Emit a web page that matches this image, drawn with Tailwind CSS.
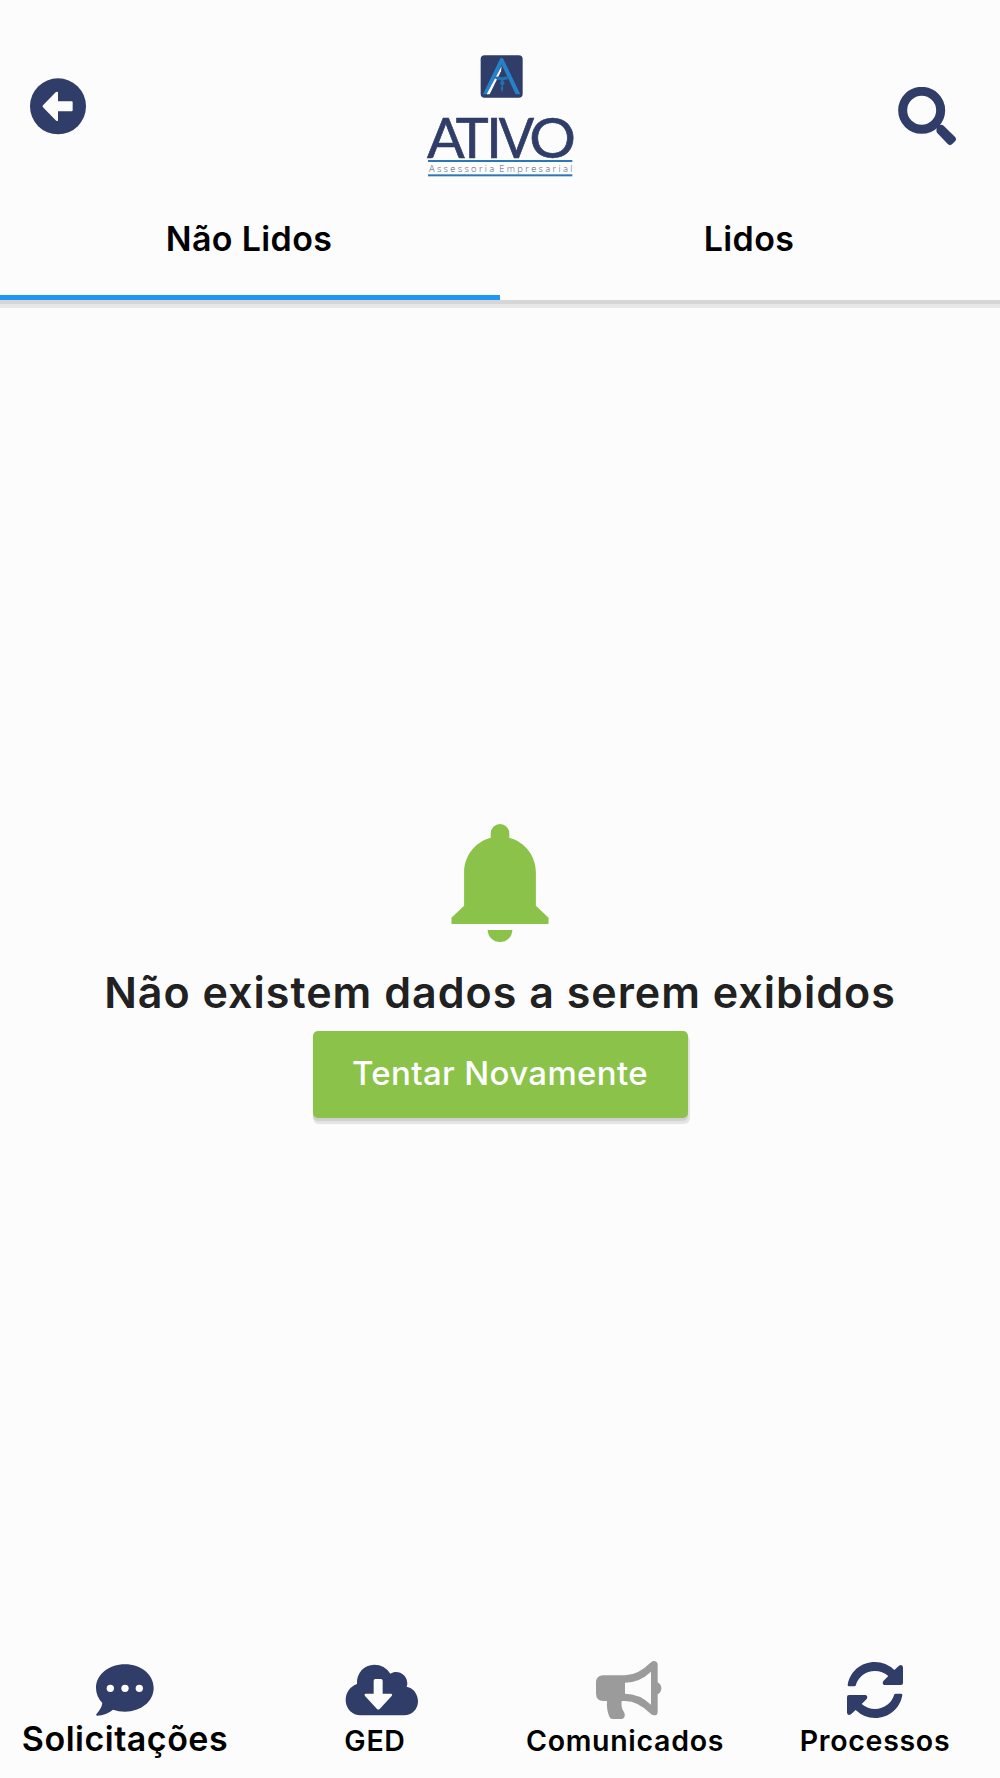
<!DOCTYPE html>
<html lang="pt-BR">
<head>
  <meta charset="UTF-8" />
  <meta name="viewport" content="width=device-width, initial-scale=1.0"/>
  <title>Ativo - Comunicados</title>
  <script src="https://cdn.jsdelivr.net/npm/@tailwindcss/browser@4"></script>
</head>
<body class="bg-[#fcfcfc] text-black font-[Inter,sans-serif] h-[1778px] flex flex-col overflow-hidden">

  <!-- Header -->
  <header class="h-[300px] shrink-0 flex flex-col bg-[#fcfcfc] shadow-[0_4px_0_#d6d6d6,0_8px_0_#e7e7e7]">
    <div class="grid grid-cols-3 h-[212px]">
      <button class="pl-[30px] pt-[78px] justify-self-start self-start" aria-label="Voltar">
        <svg class="w-[56px] h-[57px]" viewBox="90 114 168 171">
          <circle cx="174" cy="199" r="84" fill="#2f3d68"/>
          <path d="M129 196 L167 157 Q170 154 174 156 V184 H215 Q218 184 218 187 V211 Q218 214 215 214 H174 V242 Q170 244 167 241 L129 202 Q126 199 129 196Z" fill="#fcfcfc"/>
        </svg>
      </button>

      <svg class="w-[180px] h-[150px] mt-[40px] justify-self-center" viewBox="0 0 540 450">
        <rect x="212" y="46" width="126" height="127" rx="12" fill="#2f3d68"/>
        <path d="M219 163 L270 57 Q275 50 280 57 L331 163 H317 L275 74 L233 163Z" fill="#2681c8"/>
        <path d="M230 163 L275 78 L273 94 L239 163Z" fill="#fff"/>
        <path d="M252 112 Q265 107 276 112 Q287 107 299 112 Q293 121 279 121 L284 130 L278 137 L280 145 L276 159 L272 145 L275 137 L270 130 L274 121 Q258 121 252 112Z" fill="#2470ab"/>
        <g font-family="Lato" font-size="167" fill="#2f3d68" stroke="#2f3d68" stroke-width="2">
          <text x="51 137 229" y="354">ATI</text>
          <text x="266" y="354" textLength="106" lengthAdjust="spacingAndGlyphs">V</text>
          <text x="358" y="354" textLength="140" lengthAdjust="spacingAndGlyphs">O</text>
        </g>
        <rect x="54" y="360" width="433" height="6" fill="#2b78b4"/>
        <text x="57" y="395" font-family="Open Sans" font-size="28" font-weight="300" textLength="430" word-spacing="-6" fill="#4d5778">Assessoria Empresarial</text>
        <rect x="54" y="403" width="433" height="6" fill="#2b78b4"/>
      </svg>

      <button class="pr-[43px] pt-[87px] justify-self-end self-start" aria-label="Buscar">
        <svg class="w-[59px] h-[59px]" viewBox="115 81 177 177">
          <circle cx="186" cy="151" r="57" fill="none" stroke="#2f3d68" stroke-width="27"/>
          <path d="M231 203 Q231 199 239 195 Q247 193 252 197 L287 232 Q292 238 287 243 L277 253 Q271 258 265 253 L232 218 Q229 212 231 203Z" fill="#2f3d68"/>
        </svg>
      </button>
    </div>

    <!-- Tabs -->
    <nav class="grid grid-cols-2 grow text-[34px] leading-[54px] tracking-[0.35px] font-semibold text-center">
      <a class="border-b-[5px] border-[#2196f3] pr-[2px]">Não Lidos</a>
      <a class="pr-[2px]">Lidos</a>
    </nav>
  </header>

  <!-- Empty state -->
  <main class="grow flex flex-col items-center pt-[524px]">
    <svg class="w-[98px] h-[118px] shrink-0" viewBox="93 71 294 355" fill="#8bc34a">
      <path d="M212 112 V99 A28 28 0 0 1 268 99 V112 C315 125 348 166 348 217 V317 L386 353 V372 H94 V353 L132 317 V217 C132 166 165 125 212 112Z"/>
      <path d="M203 390 H277 A37 36 0 0 1 203 390Z"/>
    </svg>
    <h1 class="mt-[25px] text-[43px] leading-[50px] tracking-[1px] font-semibold text-[#212121] whitespace-nowrap">Não existem dados a serem exibidos</h1>
    <button class="mt-[14px] w-[375px] h-[87px] pb-[1px] rounded-[5px] bg-[#8bc34a] text-white text-[33px] tracking-[0.35px] font-medium shadow-[0_3px_1px_#cfcfcf,1px_5px_1px_1px_#e4e4e4]">Tentar Novamente</button>
  </main>

  <!-- Bottom navigation -->
  <footer class="h-[120px] shrink-0 grid grid-cols-4 text-[28.500px] leading-[34px] tracking-[0.7px] font-semibold">
    <a class="flex flex-col items-center">
      <svg class="w-[60px] h-[62px]" viewBox="286 54 180 186">
        <path d="M376 73 C424 73 462 104 462 144 C462 184 424 215 376 215 Q356 215 340 209 Q320 226 292 227 Q287 226 291 221 Q306 205 308 189 Q289 169 289 144 C289 104 328 73 376 73Z" fill="#2f3d68"/>
        <g fill="#fff"><circle cx="332" cy="145" r="11"/><circle cx="376" cy="145" r="11"/><circle cx="419" cy="145" r="11"/></g>
      </svg>
      <span class="-mt-[1px] text-[34px] leading-[40px] tracking-[0.5px]">Solicitações</span>
    </a>
    <a class="flex flex-col items-center">
      <svg class="w-[74px] h-[62px] ml-[14px]" viewBox="136 54 222 186">
        <path d="M183 226 C158 226 138 206 138 180 C138 157 152 139 172 132 C170 99 193 74 224 74 Q255 74 272 101 C293 87 324 103 323 132 L321 140 C341 144 355 162 355 184 C355 208 337 226 313 226Z" fill="#2f3d68"/>
        <path d="M227 117 H244 Q249 117 249 122 V161 H275 Q280 163 276 168 L240 207 Q236 210 232 207 L196 168 Q192 163 197 161 H222 V122 Q222 117 227 117Z" fill="#fcfcfc"/>
      </svg>
      <span class="mt-[4px]">GED</span>
    </a>
    <a class="flex flex-col items-center">
      <svg class="w-[67px] h-[62px] ml-[7px]" viewBox="285 54 201 186" fill="#9b9b9b">
        <path fill-rule="evenodd" d="M310 106 H375 Q414 106 453 67 Q461 60 470 66 Q473 69 473 74 V127 Q484 133 484 145 Q484 157 473 163 V215 Q473 221 470 224 Q461 229 453 222 Q414 183 375 183 H365 Q362 203 372 216 Q379 231 367 237 H338 Q331 237 328 230 Q319 210 321 183 H310 Q288 183 288 160 V129 Q288 106 310 106Z M375 128 V161 Q418 161 453 194 V95 Q418 128 375 128Z"/>
      </svg>
      <span class="mt-[4px]">Comunicados</span>
    </a>
    <a class="flex flex-col items-center">
      <svg class="w-[58px] h-[62px]" viewBox="228 54 174 186" fill="#2f3d68">
        <path id="arc" d="M233 135 C240 94 273 66 315 66 Q348 66 373 90 L387 77 Q397 72 399 82 V129 Q399 135 393 135 H343 Q335 132 340 123 L355 108 Q337 93 315 93 C287 93 264 111 257 137 L253 139 H237 Q233 139 233 135Z"/>
        <use href="#arc" transform="rotate(180 315 150)"/>
      </svg>
      <span class="mt-[4px]">Processos</span>
    </a>
  </footer>

</body>
</html>
